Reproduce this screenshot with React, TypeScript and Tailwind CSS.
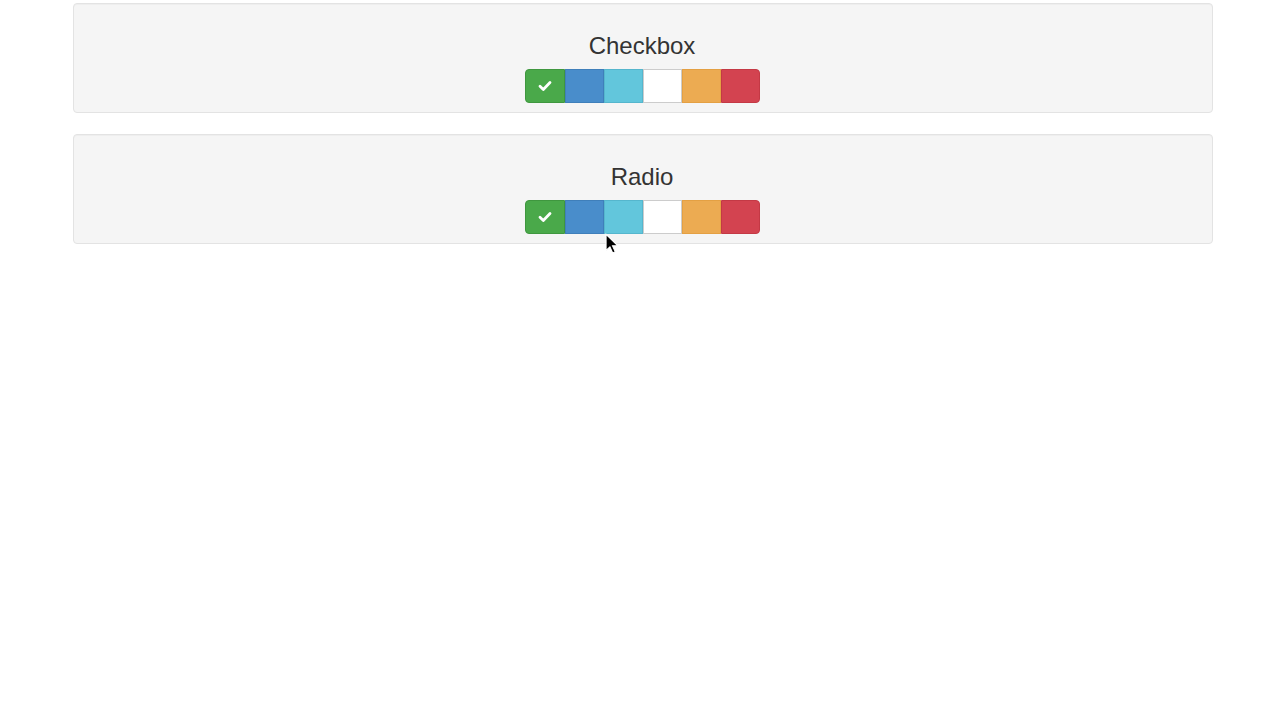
const swatches = [
  { bg: "bg-[#4aa94a]", border: "border-[#3f973f]", checked: true },
  { bg: "bg-[#498dcb]", border: "border-[#3f7fba]" },
  { bg: "bg-[#62c6dc]", border: "border-[#55b6cd]" },
  { bg: "bg-white", border: "border-[#cccccc]" },
  { bg: "bg-[#ecab52]", border: "border-[#e4a043]" },
  { bg: "bg-[#d34350]", border: "border-[#c43945]" },
];

const Check = () => (
  <svg width="14" height="14" viewBox="0 0 14 14" fill="none">
    <path
      d="M2 7.3 5.3 10.4 12 3.6"
      stroke="white"
      strokeWidth="2.8"
      strokeLinecap="round"
      strokeLinejoin="round"
    />
  </svg>
);

const ColorPicker = () => (
  <div className="flex">
    {swatches.map((s, i) => (
      <div
        key={i}
        className={`flex h-[34px] items-center justify-center border ${s.bg} ${s.border} ${
          i === 0 ? "w-[40px] rounded-l-[4px]" : "w-[39px]"
        } ${i === swatches.length - 1 ? "rounded-r-[4px]" : ""}`}
      >
        {s.checked && <Check />}
      </div>
    ))}
  </div>
);

const Well = ({ title }: { title: string }) => (
  <div className="flex flex-col items-center rounded-[4px] border border-[#e3e3e3] bg-[#f5f5f5] pt-[28px] pr-[2px] pb-[9px] shadow-[inset_0_1px_1px_rgba(0,0,0,0.03)]">
    <h3 className="mb-[10px] text-[24px] leading-[27px] text-[#333]">{title}</h3>
    <ColorPicker />
  </div>
);

const Cursor = () => (
  <svg
    className="absolute left-[605px] top-[233px]"
    width="15"
    height="22"
    viewBox="0 0 14 20"
  >
    <path
      d="M1 1v15l3.6-3.4 2.6 5.8 2.4-1.1-2.6-5.6H12z"
      fill="black"
      stroke="white"
      strokeWidth="1"
    />
  </svg>
);

export default function App() {
  return (
    <div className="relative h-[720px] w-[1280px] bg-white font-['Liberation_Sans',Arial,sans-serif]">
      <div className="ml-[73px] flex w-[1140px] flex-col gap-[21px] pt-[3px]">
        <Well title="Checkbox" />
        <Well title="Radio" />
      </div>
      <Cursor />
    </div>
  );
}
